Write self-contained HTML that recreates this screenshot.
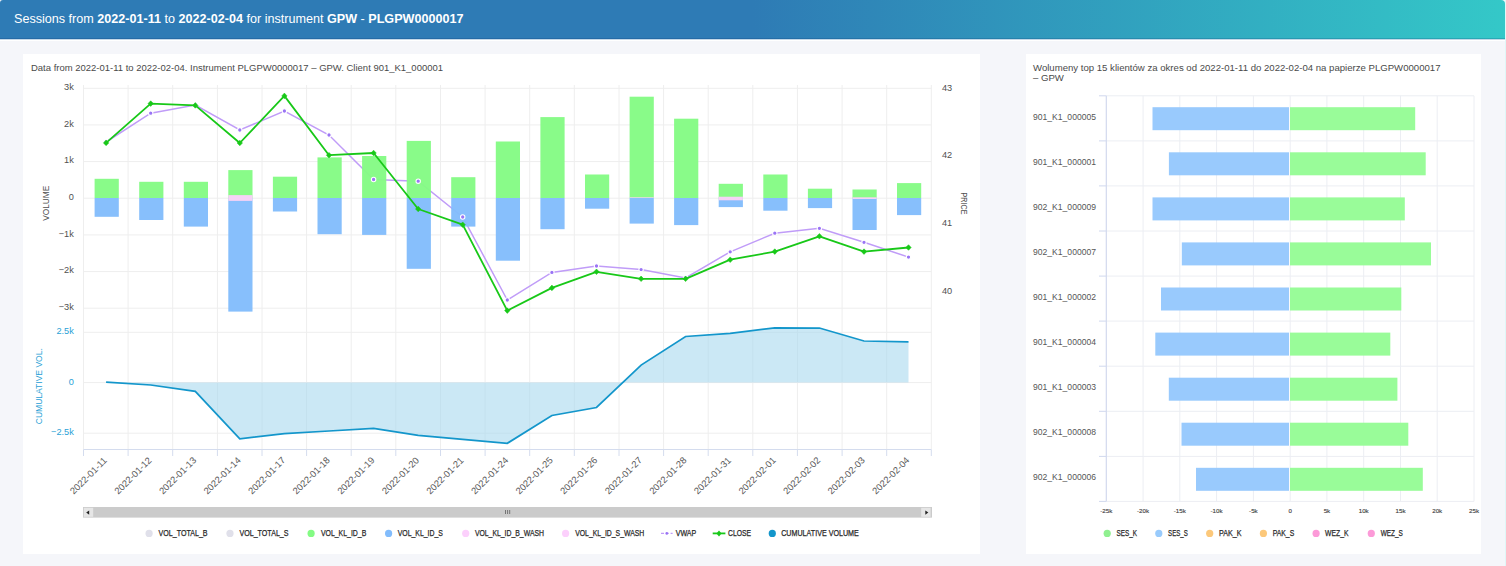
<!DOCTYPE html>
<html><head><meta charset="utf-8"><style>
html,body{margin:0;padding:0;}
body{width:1506px;height:566px;position:relative;overflow:hidden;background:#f5f6fa;font-family:"Liberation Sans", sans-serif;}
.hdr{position:absolute;left:0;top:0;width:1505px;height:39px;background:linear-gradient(90deg,#2e7bb5 0%,#2e7bb5 50%,#34c8c8 100%);border-radius:3px 4px 0 0;box-shadow:inset 0 -1px 0 rgba(0,40,100,0.18);}
.hdr span{position:absolute;left:14px;top:12px;font-size:12.6px;color:#fff;white-space:nowrap;}
.line{position:absolute;left:0;top:39px;width:1506px;height:2px;background:linear-gradient(#c4d8e8 50%,#fff 50%);}
.card{position:absolute;background:#fff;top:54px;height:500px;}
</style></head><body>
<div class="hdr"><span>Sessions from <b>2022-01-11</b> to <b>2022-02-04</b> for instrument <b>GPW</b> - <b>PLGPW0000017</b></span></div>
<div class="line"></div>
<div style="position:absolute;left:1505px;top:0;width:1px;height:566px;background:#dff8f8"></div>
<div class="card" style="left:23px;width:957px"></div>
<div class="card" style="left:1026px;width:455px"></div>
<svg width="1506" height="566" viewBox="0 0 1506 566" style="position:absolute;left:0;top:0" font-family='"Liberation Sans", sans-serif'>
<path d="M83.5 88.3H931.3 M83.5 124.9H931.3 M83.5 161.6H931.3 M83.5 198.2H931.3 M83.5 234.9H931.3 M83.5 271.6H931.3 M83.5 308.2H931.3 M83.5 332.3H931.3 M83.5 382.6H931.3 M83.5 433.2H931.3" stroke="#eeeeee" stroke-width="1" fill="none"/>
<path d="M83.5 85V449.5 M128.1 85V449.5 M172.7 85V449.5 M217.4 85V449.5 M262.0 85V449.5 M306.6 85V449.5 M351.2 85V449.5 M395.8 85V449.5 M440.5 85V449.5 M485.1 85V449.5 M529.7 85V449.5 M574.3 85V449.5 M619.0 85V449.5 M663.6 85V449.5 M708.2 85V449.5 M752.8 85V449.5 M797.4 85V449.5 M842.1 85V449.5 M886.7 85V449.5 M931.3 85V449.5" stroke="#eeeeee" stroke-width="1" fill="none"/>
<polyline points="106.1,142.0 150.7,113.2 195.3,105.0 239.8,130.0 284.4,111.0 329.0,135.0 373.6,179.5 418.2,181.2 462.7,217.0 507.3,300.0 551.9,272.4 596.5,266.0 641.1,269.6 685.6,278.0 730.2,251.8 774.8,233.2 819.4,228.3 864.0,242.3 908.5,257.1" fill="none" stroke="#c09cf8" stroke-width="1.5"/>
<rect x="94.6" y="178.8" width="24.2" height="19.2" fill="#84fb84" fill-opacity="0.96"/>
<rect x="94.6" y="198" width="24.2" height="18.8" fill="#82bcfc" fill-opacity="0.96"/>
<rect x="139.2" y="181.8" width="24.2" height="16.2" fill="#84fb84" fill-opacity="0.96"/>
<rect x="139.2" y="198" width="24.2" height="22.0" fill="#82bcfc" fill-opacity="0.96"/>
<rect x="183.8" y="181.8" width="24.2" height="16.2" fill="#84fb84" fill-opacity="0.96"/>
<rect x="183.8" y="198" width="24.2" height="28.6" fill="#82bcfc" fill-opacity="0.96"/>
<rect x="228.3" y="170.1" width="24.2" height="27.9" fill="#84fb84" fill-opacity="0.96"/>
<rect x="228.3" y="198" width="24.2" height="113.6" fill="#82bcfc" fill-opacity="0.96"/>
<rect x="228.3" y="195.1" width="24.2" height="2.9" fill="#f6d2f6"/>
<rect x="228.3" y="198" width="24.2" height="2.9" fill="#f6d2f6"/>
<rect x="272.9" y="176.7" width="24.2" height="21.3" fill="#84fb84" fill-opacity="0.96"/>
<rect x="272.9" y="198" width="24.2" height="13.5" fill="#82bcfc" fill-opacity="0.96"/>
<rect x="317.5" y="157.4" width="24.2" height="40.6" fill="#84fb84" fill-opacity="0.96"/>
<rect x="317.5" y="198" width="24.2" height="36.2" fill="#82bcfc" fill-opacity="0.96"/>
<rect x="362.1" y="156.0" width="24.2" height="42.0" fill="#84fb84" fill-opacity="0.96"/>
<rect x="362.1" y="198" width="24.2" height="36.9" fill="#82bcfc" fill-opacity="0.96"/>
<rect x="406.7" y="140.9" width="24.2" height="57.1" fill="#84fb84" fill-opacity="0.96"/>
<rect x="406.7" y="198" width="24.2" height="70.8" fill="#82bcfc" fill-opacity="0.96"/>
<rect x="451.2" y="177.2" width="24.2" height="20.8" fill="#84fb84" fill-opacity="0.96"/>
<rect x="451.2" y="198" width="24.2" height="28.6" fill="#82bcfc" fill-opacity="0.96"/>
<rect x="495.8" y="141.5" width="24.2" height="56.5" fill="#84fb84" fill-opacity="0.96"/>
<rect x="495.8" y="198" width="24.2" height="62.7" fill="#82bcfc" fill-opacity="0.96"/>
<rect x="540.4" y="117.1" width="24.2" height="80.9" fill="#84fb84" fill-opacity="0.96"/>
<rect x="540.4" y="198" width="24.2" height="31.2" fill="#82bcfc" fill-opacity="0.96"/>
<rect x="585.0" y="174.5" width="24.2" height="23.5" fill="#84fb84" fill-opacity="0.96"/>
<rect x="585.0" y="198" width="24.2" height="10.7" fill="#82bcfc" fill-opacity="0.96"/>
<rect x="629.6" y="96.7" width="24.2" height="101.3" fill="#84fb84" fill-opacity="0.96"/>
<rect x="629.6" y="198" width="24.2" height="25.6" fill="#82bcfc" fill-opacity="0.96"/>
<rect x="629.6" y="197.3" width="24.2" height="0.7" fill="#f6d2f6"/>
<rect x="674.1" y="118.7" width="24.2" height="79.3" fill="#84fb84" fill-opacity="0.96"/>
<rect x="674.1" y="198" width="24.2" height="27.1" fill="#82bcfc" fill-opacity="0.96"/>
<rect x="718.7" y="183.8" width="24.2" height="14.2" fill="#84fb84" fill-opacity="0.96"/>
<rect x="718.7" y="198" width="24.2" height="9.1" fill="#82bcfc" fill-opacity="0.96"/>
<rect x="718.7" y="196.7" width="24.2" height="1.3" fill="#f6d2f6"/>
<rect x="718.7" y="198" width="24.2" height="2.3" fill="#f6d2f6"/>
<rect x="763.3" y="174.5" width="24.2" height="23.5" fill="#84fb84" fill-opacity="0.96"/>
<rect x="763.3" y="198" width="24.2" height="12.7" fill="#82bcfc" fill-opacity="0.96"/>
<rect x="807.9" y="188.7" width="24.2" height="9.3" fill="#84fb84" fill-opacity="0.96"/>
<rect x="807.9" y="198" width="24.2" height="10.1" fill="#82bcfc" fill-opacity="0.96"/>
<rect x="852.5" y="189.5" width="24.2" height="8.5" fill="#84fb84" fill-opacity="0.96"/>
<rect x="852.5" y="198" width="24.2" height="32.0" fill="#82bcfc" fill-opacity="0.96"/>
<rect x="852.5" y="197.3" width="24.2" height="0.7" fill="#f6d2f6"/>
<rect x="852.5" y="198" width="24.2" height="1.0" fill="#f6d2f6"/>
<rect x="897.0" y="183.1" width="24.2" height="14.9" fill="#84fb84" fill-opacity="0.96"/>
<rect x="897.0" y="198" width="24.2" height="17.1" fill="#82bcfc" fill-opacity="0.96"/>
<circle cx="106.1" cy="142.0" r="2.2" fill="#9a74f5" stroke="#fff" stroke-width="1.1"/>
<circle cx="150.7" cy="113.2" r="2.2" fill="#9a74f5" stroke="#fff" stroke-width="1.1"/>
<circle cx="195.3" cy="105.0" r="2.2" fill="#9a74f5" stroke="#fff" stroke-width="1.1"/>
<circle cx="239.8" cy="130.0" r="2.2" fill="#9a74f5" stroke="#fff" stroke-width="1.1"/>
<circle cx="284.4" cy="111.0" r="2.2" fill="#9a74f5" stroke="#fff" stroke-width="1.1"/>
<circle cx="329.0" cy="135.0" r="2.2" fill="#9a74f5" stroke="#fff" stroke-width="1.1"/>
<circle cx="373.6" cy="179.5" r="2.2" fill="#9a74f5" stroke="#fff" stroke-width="1.1"/>
<circle cx="418.2" cy="181.2" r="2.2" fill="#9a74f5" stroke="#fff" stroke-width="1.1"/>
<circle cx="462.7" cy="217.0" r="2.2" fill="#9a74f5" stroke="#fff" stroke-width="1.1"/>
<circle cx="507.3" cy="300.0" r="2.2" fill="#9a74f5" stroke="#fff" stroke-width="1.1"/>
<circle cx="551.9" cy="272.4" r="2.2" fill="#9a74f5" stroke="#fff" stroke-width="1.1"/>
<circle cx="596.5" cy="266.0" r="2.2" fill="#9a74f5" stroke="#fff" stroke-width="1.1"/>
<circle cx="641.1" cy="269.6" r="2.2" fill="#9a74f5" stroke="#fff" stroke-width="1.1"/>
<circle cx="685.6" cy="278.0" r="2.2" fill="#9a74f5" stroke="#fff" stroke-width="1.1"/>
<circle cx="730.2" cy="251.8" r="2.2" fill="#9a74f5" stroke="#fff" stroke-width="1.1"/>
<circle cx="774.8" cy="233.2" r="2.2" fill="#9a74f5" stroke="#fff" stroke-width="1.1"/>
<circle cx="819.4" cy="228.3" r="2.2" fill="#9a74f5" stroke="#fff" stroke-width="1.1"/>
<circle cx="864.0" cy="242.3" r="2.2" fill="#9a74f5" stroke="#fff" stroke-width="1.1"/>
<circle cx="908.5" cy="257.1" r="2.2" fill="#9a74f5" stroke="#fff" stroke-width="1.1"/>
<polyline points="106.1,142.9 150.7,103.6 195.3,105.4 239.8,143.0 284.4,95.9 329.0,155.2 373.6,153.0 418.2,209.0 462.7,224.7 507.3,310.6 551.9,287.9 596.5,271.8 641.1,278.8 685.6,278.8 730.2,259.7 774.8,251.6 819.4,236.3 864.0,251.6 908.5,247.5" fill="none" stroke="#18c818" stroke-width="1.8" stroke-linejoin="round"/>
<path d="M106.1 140.1L108.8 142.9L106.1 145.7L103.4 142.9Z" fill="#18c818" stroke="#18c818" stroke-width="0.5" stroke-linejoin="round"/>
<path d="M150.7 100.8L153.4 103.6L150.7 106.4L148.0 103.6Z" fill="#18c818" stroke="#18c818" stroke-width="0.5" stroke-linejoin="round"/>
<path d="M195.3 102.6L198.0 105.4L195.3 108.2L192.6 105.4Z" fill="#18c818" stroke="#18c818" stroke-width="0.5" stroke-linejoin="round"/>
<path d="M239.8 140.2L242.5 143.0L239.8 145.8L237.1 143.0Z" fill="#18c818" stroke="#18c818" stroke-width="0.5" stroke-linejoin="round"/>
<path d="M284.4 93.1L287.1 95.9L284.4 98.7L281.7 95.9Z" fill="#18c818" stroke="#18c818" stroke-width="0.5" stroke-linejoin="round"/>
<path d="M329.0 152.4L331.7 155.2L329.0 158.0L326.3 155.2Z" fill="#18c818" stroke="#18c818" stroke-width="0.5" stroke-linejoin="round"/>
<path d="M373.6 150.2L376.3 153.0L373.6 155.8L370.9 153.0Z" fill="#18c818" stroke="#18c818" stroke-width="0.5" stroke-linejoin="round"/>
<path d="M418.2 206.2L420.9 209.0L418.2 211.8L415.5 209.0Z" fill="#18c818" stroke="#18c818" stroke-width="0.5" stroke-linejoin="round"/>
<path d="M462.7 221.9L465.4 224.7L462.7 227.5L460.0 224.7Z" fill="#18c818" stroke="#18c818" stroke-width="0.5" stroke-linejoin="round"/>
<path d="M507.3 307.8L510.0 310.6L507.3 313.4L504.6 310.6Z" fill="#18c818" stroke="#18c818" stroke-width="0.5" stroke-linejoin="round"/>
<path d="M551.9 285.1L554.6 287.9L551.9 290.7L549.2 287.9Z" fill="#18c818" stroke="#18c818" stroke-width="0.5" stroke-linejoin="round"/>
<path d="M596.5 269.0L599.2 271.8L596.5 274.6L593.8 271.8Z" fill="#18c818" stroke="#18c818" stroke-width="0.5" stroke-linejoin="round"/>
<path d="M641.1 276.0L643.8 278.8L641.1 281.6L638.4 278.8Z" fill="#18c818" stroke="#18c818" stroke-width="0.5" stroke-linejoin="round"/>
<path d="M685.6 276.0L688.3 278.8L685.6 281.6L682.9 278.8Z" fill="#18c818" stroke="#18c818" stroke-width="0.5" stroke-linejoin="round"/>
<path d="M730.2 256.9L732.9 259.7L730.2 262.5L727.5 259.7Z" fill="#18c818" stroke="#18c818" stroke-width="0.5" stroke-linejoin="round"/>
<path d="M774.8 248.8L777.5 251.6L774.8 254.4L772.1 251.6Z" fill="#18c818" stroke="#18c818" stroke-width="0.5" stroke-linejoin="round"/>
<path d="M819.4 233.5L822.1 236.3L819.4 239.1L816.7 236.3Z" fill="#18c818" stroke="#18c818" stroke-width="0.5" stroke-linejoin="round"/>
<path d="M864.0 248.8L866.7 251.6L864.0 254.4L861.3 251.6Z" fill="#18c818" stroke="#18c818" stroke-width="0.5" stroke-linejoin="round"/>
<path d="M908.5 244.7L911.2 247.5L908.5 250.3L905.8 247.5Z" fill="#18c818" stroke="#18c818" stroke-width="0.5" stroke-linejoin="round"/>
<path d="M106.1 382.6 L106.1 382.1 L150.7 385.0 L195.3 391.3 L239.8 438.8 L284.4 433.7 L329.0 431.0 L373.6 428.4 L418.2 435.3 L462.7 439.3 L507.3 443.3 L551.9 415.5 L596.5 407.5 L641.1 365.1 L685.6 336.5 L730.2 333.3 L774.8 327.8 L819.4 328.0 L864.0 341.0 L908.5 341.8 L908.5 382.6 Z" fill="#a6d8ee" fill-opacity="0.58"/>
<polyline points="106.1,382.1 150.7,385.0 195.3,391.3 239.8,438.8 284.4,433.7 329.0,431.0 373.6,428.4 418.2,435.3 462.7,439.3 507.3,443.3 551.9,415.5 596.5,407.5 641.1,365.1 685.6,336.5 730.2,333.3 774.8,327.8 819.4,328.0 864.0,341.0 908.5,341.8" fill="none" stroke="#1396cb" stroke-width="1.75"/>
<path d="M83.5 449.5H931.3" stroke="#d4dcee" stroke-width="1"/>
<path d="M83.5 449.5V456 M128.1 449.5V456 M172.7 449.5V456 M217.4 449.5V456 M262.0 449.5V456 M306.6 449.5V456 M351.2 449.5V456 M395.8 449.5V456 M440.5 449.5V456 M485.1 449.5V456 M529.7 449.5V456 M574.3 449.5V456 M619.0 449.5V456 M663.6 449.5V456 M708.2 449.5V456 M752.8 449.5V456 M797.4 449.5V456 M842.1 449.5V456 M886.7 449.5V456 M931.3 449.5V456" stroke="#d4dcee" stroke-width="1"/>
<text x="103.1" y="456.4" font-size="9.3" fill="#5a5a5a" text-anchor="end" textLength="48" lengthAdjust="spacingAndGlyphs" transform="rotate(-45 103.1 456.4)" dominant-baseline="hanging">2022-01-11</text>
<text x="147.7" y="456.4" font-size="9.3" fill="#5a5a5a" text-anchor="end" textLength="48" lengthAdjust="spacingAndGlyphs" transform="rotate(-45 147.7 456.4)" dominant-baseline="hanging">2022-01-12</text>
<text x="192.3" y="456.4" font-size="9.3" fill="#5a5a5a" text-anchor="end" textLength="48" lengthAdjust="spacingAndGlyphs" transform="rotate(-45 192.3 456.4)" dominant-baseline="hanging">2022-01-13</text>
<text x="236.8" y="456.4" font-size="9.3" fill="#5a5a5a" text-anchor="end" textLength="48" lengthAdjust="spacingAndGlyphs" transform="rotate(-45 236.8 456.4)" dominant-baseline="hanging">2022-01-14</text>
<text x="281.4" y="456.4" font-size="9.3" fill="#5a5a5a" text-anchor="end" textLength="48" lengthAdjust="spacingAndGlyphs" transform="rotate(-45 281.4 456.4)" dominant-baseline="hanging">2022-01-17</text>
<text x="326.0" y="456.4" font-size="9.3" fill="#5a5a5a" text-anchor="end" textLength="48" lengthAdjust="spacingAndGlyphs" transform="rotate(-45 326.0 456.4)" dominant-baseline="hanging">2022-01-18</text>
<text x="370.6" y="456.4" font-size="9.3" fill="#5a5a5a" text-anchor="end" textLength="48" lengthAdjust="spacingAndGlyphs" transform="rotate(-45 370.6 456.4)" dominant-baseline="hanging">2022-01-19</text>
<text x="415.2" y="456.4" font-size="9.3" fill="#5a5a5a" text-anchor="end" textLength="48" lengthAdjust="spacingAndGlyphs" transform="rotate(-45 415.2 456.4)" dominant-baseline="hanging">2022-01-20</text>
<text x="459.7" y="456.4" font-size="9.3" fill="#5a5a5a" text-anchor="end" textLength="48" lengthAdjust="spacingAndGlyphs" transform="rotate(-45 459.7 456.4)" dominant-baseline="hanging">2022-01-21</text>
<text x="504.3" y="456.4" font-size="9.3" fill="#5a5a5a" text-anchor="end" textLength="48" lengthAdjust="spacingAndGlyphs" transform="rotate(-45 504.3 456.4)" dominant-baseline="hanging">2022-01-24</text>
<text x="548.9" y="456.4" font-size="9.3" fill="#5a5a5a" text-anchor="end" textLength="48" lengthAdjust="spacingAndGlyphs" transform="rotate(-45 548.9 456.4)" dominant-baseline="hanging">2022-01-25</text>
<text x="593.5" y="456.4" font-size="9.3" fill="#5a5a5a" text-anchor="end" textLength="48" lengthAdjust="spacingAndGlyphs" transform="rotate(-45 593.5 456.4)" dominant-baseline="hanging">2022-01-26</text>
<text x="638.1" y="456.4" font-size="9.3" fill="#5a5a5a" text-anchor="end" textLength="48" lengthAdjust="spacingAndGlyphs" transform="rotate(-45 638.1 456.4)" dominant-baseline="hanging">2022-01-27</text>
<text x="682.6" y="456.4" font-size="9.3" fill="#5a5a5a" text-anchor="end" textLength="48" lengthAdjust="spacingAndGlyphs" transform="rotate(-45 682.6 456.4)" dominant-baseline="hanging">2022-01-28</text>
<text x="727.2" y="456.4" font-size="9.3" fill="#5a5a5a" text-anchor="end" textLength="48" lengthAdjust="spacingAndGlyphs" transform="rotate(-45 727.2 456.4)" dominant-baseline="hanging">2022-01-31</text>
<text x="771.8" y="456.4" font-size="9.3" fill="#5a5a5a" text-anchor="end" textLength="48" lengthAdjust="spacingAndGlyphs" transform="rotate(-45 771.8 456.4)" dominant-baseline="hanging">2022-02-01</text>
<text x="816.4" y="456.4" font-size="9.3" fill="#5a5a5a" text-anchor="end" textLength="48" lengthAdjust="spacingAndGlyphs" transform="rotate(-45 816.4 456.4)" dominant-baseline="hanging">2022-02-02</text>
<text x="861.0" y="456.4" font-size="9.3" fill="#5a5a5a" text-anchor="end" textLength="48" lengthAdjust="spacingAndGlyphs" transform="rotate(-45 861.0 456.4)" dominant-baseline="hanging">2022-02-03</text>
<text x="905.5" y="456.4" font-size="9.3" fill="#5a5a5a" text-anchor="end" textLength="48" lengthAdjust="spacingAndGlyphs" transform="rotate(-45 905.5 456.4)" dominant-baseline="hanging">2022-02-04</text>
<text x="73.8" y="89.9" font-size="9.2" fill="#505050" text-anchor="end">3k</text>
<text x="73.8" y="126.6" font-size="9.2" fill="#505050" text-anchor="end">2k</text>
<text x="73.8" y="163.2" font-size="9.2" fill="#505050" text-anchor="end">1k</text>
<text x="73.8" y="199.9" font-size="9.2" fill="#505050" text-anchor="end">0</text>
<text x="73.8" y="236.6" font-size="9.2" fill="#505050" text-anchor="end">−1k</text>
<text x="73.8" y="273.2" font-size="9.2" fill="#505050" text-anchor="end">−2k</text>
<text x="73.8" y="309.9" font-size="9.2" fill="#505050" text-anchor="end">−3k</text>
<text x="73.8" y="334.2" font-size="9.2" fill="#2a9fd6" text-anchor="end">2.5k</text>
<text x="73.8" y="384.5" font-size="9.2" fill="#2a9fd6" text-anchor="end">0</text>
<text x="73.8" y="435.1" font-size="9.2" fill="#2a9fd6" text-anchor="end">−2.5k</text>
<text x="942" y="90.6" font-size="9.2" fill="#505050">43</text>
<text x="942" y="158.3" font-size="9.2" fill="#505050">42</text>
<text x="942" y="226.0" font-size="9.2" fill="#505050">41</text>
<text x="942" y="293.7" font-size="9.2" fill="#505050">40</text>
<text x="0" y="0" font-size="8.6" fill="#505050" text-anchor="middle" textLength="35" lengthAdjust="spacingAndGlyphs" transform="translate(49.3 203.3) rotate(-90)">VOLUME</text>
<text x="0" y="0" font-size="8.6" fill="#505050" text-anchor="middle" textLength="22" lengthAdjust="spacingAndGlyphs" transform="translate(960.8 203.5) rotate(90)">PRICE</text>
<text x="0" y="0" font-size="8.6" fill="#2a9fd6" text-anchor="middle" textLength="76" lengthAdjust="spacingAndGlyphs" transform="translate(42 386.2) rotate(-90)">CUMULATIVE VOL.</text>
<text x="31" y="71" font-size="9.6" fill="#4a4a4a" textLength="412" lengthAdjust="spacingAndGlyphs">Data from 2022‑01‑11 to 2022‑02‑04. Instrument PLGPW0000017 – GPW. Client 901_K1_000001</text>
<rect x="83" y="507" width="849" height="10.6" fill="#cbcbcb"/>
<rect x="83.8" y="507.8" width="9.4" height="9" fill="#e6e6e6"/>
<rect x="921.2" y="507.8" width="9.4" height="9" fill="#e6e6e6"/>
<path d="M86.2 512.6L89.2 510.5V514.8Z" fill="#222"/>
<path d="M928.3 512.6L925.3 510.5V514.8Z" fill="#222"/>
<path d="M505.5 510V514M507.6 510V514M509.7 510V514" stroke="#6a6a6a" stroke-width="0.9"/>
<circle cx="149.1" cy="533.4" r="3.6" fill="#e0e0ea"/>
<text x="158.6" y="536" font-size="8.2" fill="#2a2a2a" textLength="49.0" lengthAdjust="spacingAndGlyphs" stroke="#2a2a2a" stroke-width="0.25">VOL_TOTAL_B</text>
<circle cx="230" cy="533.4" r="3.6" fill="#e0e0ea"/>
<text x="239.4" y="536" font-size="8.2" fill="#2a2a2a" textLength="49.2" lengthAdjust="spacingAndGlyphs" stroke="#2a2a2a" stroke-width="0.25">VOL_TOTAL_S</text>
<circle cx="311.1" cy="533.4" r="3.6" fill="#84fb84"/>
<text x="320.9" y="536" font-size="8.2" fill="#2a2a2a" textLength="45.4" lengthAdjust="spacingAndGlyphs" stroke="#2a2a2a" stroke-width="0.25">VOL_KL_ID_B</text>
<circle cx="388.6" cy="533.4" r="3.6" fill="#82bcfc"/>
<text x="397.7" y="536" font-size="8.2" fill="#2a2a2a" textLength="45.2" lengthAdjust="spacingAndGlyphs" stroke="#2a2a2a" stroke-width="0.25">VOL_KL_ID_S</text>
<circle cx="465.7" cy="533.4" r="3.6" fill="#fcd0fc"/>
<text x="474.9" y="536" font-size="8.2" fill="#2a2a2a" textLength="69.1" lengthAdjust="spacingAndGlyphs" stroke="#2a2a2a" stroke-width="0.25">VOL_KL_ID_B_WASH</text>
<circle cx="565.6" cy="533.4" r="3.6" fill="#fcd0fc"/>
<text x="575.2" y="536" font-size="8.2" fill="#2a2a2a" textLength="69.1" lengthAdjust="spacingAndGlyphs" stroke="#2a2a2a" stroke-width="0.25">VOL_KL_ID_S_WASH</text>
<path d="M661 533.4H672.6" stroke="#c09cf8" stroke-width="1.2" stroke-dasharray="3 1.8"/>
<circle cx="666.8" cy="533.4" r="1.3" fill="#9a74f5"/>
<text x="675.7" y="536" font-size="8.2" fill="#2a2a2a" textLength="20.6" lengthAdjust="spacingAndGlyphs" stroke="#2a2a2a" stroke-width="0.25">VWAP</text>
<path d="M712.7 533.4H725.4" stroke="#18c818" stroke-width="1.8"/>
<path d="M719 530.4L721.5 533.4L719 536.4L716.5 533.4Z" fill="#18c818"/>
<text x="728" y="536" font-size="8.2" fill="#2a2a2a" textLength="23.0" lengthAdjust="spacingAndGlyphs" stroke="#2a2a2a" stroke-width="0.25">CLOSE</text>
<circle cx="772.3" cy="533.4" r="3.6" fill="#1396cb"/>
<text x="781.2" y="536" font-size="8.2" fill="#2a2a2a" textLength="77.6" lengthAdjust="spacingAndGlyphs" stroke="#2a2a2a" stroke-width="0.25">CUMULATIVE VOLUME</text>
<path d="M1106.3 95.8H1474.0 M1106.3 140.9H1474.0 M1106.3 185.9H1474.0 M1106.3 231.0H1474.0 M1106.3 276.1H1474.0 M1106.3 321.1H1474.0 M1106.3 366.2H1474.0 M1106.3 411.3H1474.0 M1106.3 456.4H1474.0 M1106.3 501.4H1474.0 M1106.3 95.8V501.4 M1143.1 95.8V501.4 M1179.8 95.8V501.4 M1216.6 95.8V501.4 M1253.4 95.8V501.4 M1290.2 95.8V501.4 M1326.9 95.8V501.4 M1363.7 95.8V501.4 M1400.5 95.8V501.4 M1437.2 95.8V501.4 M1474.0 95.8V501.4" stroke="#eceef3" stroke-width="1" fill="none"/>
<rect x="1152.5" y="107.2" width="136.5" height="23" fill="#95c8fd" fill-opacity="0.96"/>
<rect x="1290.0" y="107.2" width="125.2" height="23" fill="#95fc95" fill-opacity="0.96"/>
<text x="1033" y="119.6" font-size="8.8" fill="#555" textLength="63" lengthAdjust="spacingAndGlyphs">901_K1_000005</text>
<rect x="1168.9" y="152.3" width="120.1" height="23" fill="#95c8fd" fill-opacity="0.96"/>
<rect x="1290.0" y="152.3" width="135.7" height="23" fill="#95fc95" fill-opacity="0.96"/>
<text x="1033" y="164.7" font-size="8.8" fill="#555" textLength="63" lengthAdjust="spacingAndGlyphs">901_K1_000001</text>
<rect x="1152.5" y="197.4" width="136.5" height="23" fill="#95c8fd" fill-opacity="0.96"/>
<rect x="1290.0" y="197.4" width="114.8" height="23" fill="#95fc95" fill-opacity="0.96"/>
<text x="1033" y="209.8" font-size="8.8" fill="#555" textLength="63" lengthAdjust="spacingAndGlyphs">902_K1_000009</text>
<rect x="1181.8" y="242.4" width="107.2" height="23" fill="#95c8fd" fill-opacity="0.96"/>
<rect x="1290.0" y="242.4" width="141.0" height="23" fill="#95fc95" fill-opacity="0.96"/>
<text x="1033" y="254.8" font-size="8.8" fill="#555" textLength="63" lengthAdjust="spacingAndGlyphs">902_K1_000007</text>
<rect x="1161.0" y="287.5" width="128.0" height="23" fill="#95c8fd" fill-opacity="0.96"/>
<rect x="1290.0" y="287.5" width="111.3" height="23" fill="#95fc95" fill-opacity="0.96"/>
<text x="1033" y="299.9" font-size="8.8" fill="#555" textLength="63" lengthAdjust="spacingAndGlyphs">901_K1_000002</text>
<rect x="1155.3" y="332.6" width="133.7" height="23" fill="#95c8fd" fill-opacity="0.96"/>
<rect x="1290.0" y="332.6" width="100.3" height="23" fill="#95fc95" fill-opacity="0.96"/>
<text x="1033" y="345.0" font-size="8.8" fill="#555" textLength="63" lengthAdjust="spacingAndGlyphs">901_K1_000004</text>
<rect x="1168.8" y="377.7" width="120.2" height="23" fill="#95c8fd" fill-opacity="0.96"/>
<rect x="1290.0" y="377.7" width="107.4" height="23" fill="#95fc95" fill-opacity="0.96"/>
<text x="1033" y="390.1" font-size="8.8" fill="#555" textLength="63" lengthAdjust="spacingAndGlyphs">901_K1_000003</text>
<rect x="1181.5" y="422.7" width="107.5" height="23" fill="#95c8fd" fill-opacity="0.96"/>
<rect x="1290.0" y="422.7" width="118.3" height="23" fill="#95fc95" fill-opacity="0.96"/>
<text x="1033" y="435.1" font-size="8.8" fill="#555" textLength="63" lengthAdjust="spacingAndGlyphs">902_K1_000008</text>
<rect x="1196.0" y="467.8" width="93.0" height="23" fill="#95c8fd" fill-opacity="0.96"/>
<rect x="1290.0" y="467.8" width="132.8" height="23" fill="#95fc95" fill-opacity="0.96"/>
<text x="1033" y="480.2" font-size="8.8" fill="#555" textLength="63" lengthAdjust="spacingAndGlyphs">902_K1_000006</text>
<path d="M1106.3 95.8V501.4" stroke="#d0d8ee" stroke-width="1"/>
<path d="M1099 95.8H1106.3 M1099 140.9H1106.3 M1099 185.9H1106.3 M1099 231.0H1106.3 M1099 276.1H1106.3 M1099 321.1H1106.3 M1099 366.2H1106.3 M1099 411.3H1106.3 M1099 456.4H1106.3 M1099 501.4H1106.3" stroke="#d0d8ee" stroke-width="1"/>
<text x="1106.3" y="513.2" font-size="6.2" fill="#444" text-anchor="middle" stroke="#444" stroke-width="0.15">-25k</text>
<text x="1143.1" y="513.2" font-size="6.2" fill="#444" text-anchor="middle" stroke="#444" stroke-width="0.15">-20k</text>
<text x="1179.8" y="513.2" font-size="6.2" fill="#444" text-anchor="middle" stroke="#444" stroke-width="0.15">-15k</text>
<text x="1216.6" y="513.2" font-size="6.2" fill="#444" text-anchor="middle" stroke="#444" stroke-width="0.15">-10k</text>
<text x="1253.4" y="513.2" font-size="6.2" fill="#444" text-anchor="middle" stroke="#444" stroke-width="0.15">-5k</text>
<text x="1290.2" y="513.2" font-size="6.2" fill="#444" text-anchor="middle" stroke="#444" stroke-width="0.15">0</text>
<text x="1326.9" y="513.2" font-size="6.2" fill="#444" text-anchor="middle" stroke="#444" stroke-width="0.15">5k</text>
<text x="1363.7" y="513.2" font-size="6.2" fill="#444" text-anchor="middle" stroke="#444" stroke-width="0.15">10k</text>
<text x="1400.5" y="513.2" font-size="6.2" fill="#444" text-anchor="middle" stroke="#444" stroke-width="0.15">15k</text>
<text x="1437.2" y="513.2" font-size="6.2" fill="#444" text-anchor="middle" stroke="#444" stroke-width="0.15">20k</text>
<text x="1474.0" y="513.2" font-size="6.2" fill="#444" text-anchor="middle" stroke="#444" stroke-width="0.15">25k</text>
<text x="1033" y="71" font-size="9.6" fill="#4a4a4a" textLength="407.5" lengthAdjust="spacingAndGlyphs">Wolumeny top 15 klientów za okres od 2022‑01‑11 do 2022‑02‑04 na papierze PLGPW0000017</text>
<text x="1033" y="81.2" font-size="9.6" fill="#4a4a4a">– GPW</text>
<circle cx="1107.2" cy="533.4" r="3.6" fill="#90f090"/>
<text x="1116.5" y="536" font-size="8.2" fill="#2a2a2a" textLength="20.5" lengthAdjust="spacingAndGlyphs" stroke="#2a2a2a" stroke-width="0.25">SES_K</text>
<circle cx="1158.8" cy="533.4" r="3.6" fill="#99cbfc"/>
<text x="1168.1" y="536" font-size="8.2" fill="#2a2a2a" textLength="19.7" lengthAdjust="spacingAndGlyphs" stroke="#2a2a2a" stroke-width="0.25">SES_S</text>
<circle cx="1209.7" cy="533.4" r="3.6" fill="#fcc87a"/>
<text x="1219" y="536" font-size="8.2" fill="#2a2a2a" textLength="22.5" lengthAdjust="spacingAndGlyphs" stroke="#2a2a2a" stroke-width="0.25">PAK_K</text>
<circle cx="1263.4" cy="533.4" r="3.6" fill="#fcc87a"/>
<text x="1272.7" y="536" font-size="8.2" fill="#2a2a2a" textLength="21.5" lengthAdjust="spacingAndGlyphs" stroke="#2a2a2a" stroke-width="0.25">PAK_S</text>
<circle cx="1316.1" cy="533.4" r="3.6" fill="#fc9ad8"/>
<text x="1325.1" y="536" font-size="8.2" fill="#2a2a2a" textLength="23.4" lengthAdjust="spacingAndGlyphs" stroke="#2a2a2a" stroke-width="0.25">WEZ_K</text>
<circle cx="1371.3" cy="533.4" r="3.6" fill="#fc9ad8"/>
<text x="1380.7" y="536" font-size="8.2" fill="#2a2a2a" textLength="22.2" lengthAdjust="spacingAndGlyphs" stroke="#2a2a2a" stroke-width="0.25">WEZ_S</text>
</svg>
</body></html>
